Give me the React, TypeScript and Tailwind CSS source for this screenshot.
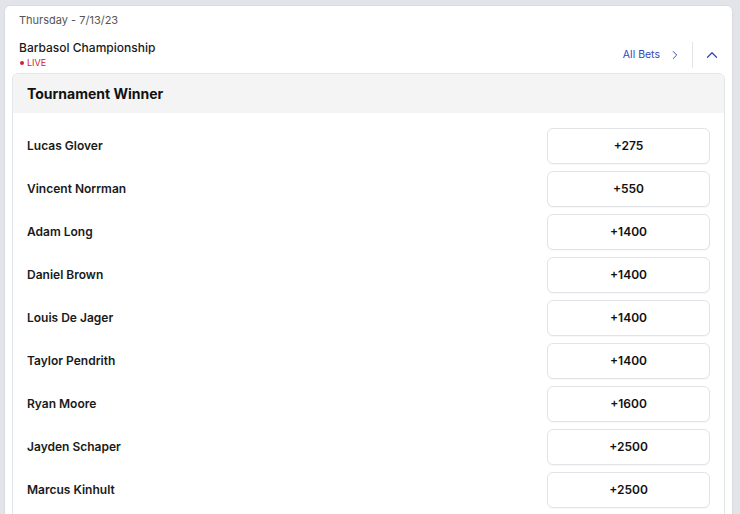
import { ChevronRight, ChevronUp } from 'lucide-react';

const runners = [
  { name: 'Lucas Glover', odds: '+275' },
  { name: 'Vincent Norrman', odds: '+550' },
  { name: 'Adam Long', odds: '+1400' },
  { name: 'Daniel Brown', odds: '+1400' },
  { name: 'Louis De Jager', odds: '+1400' },
  { name: 'Taylor Pendrith', odds: '+1400' },
  { name: 'Ryan Moore', odds: '+1600' },
  { name: 'Jayden Schaper', odds: '+2500' },
  { name: 'Marcus Kinhult', odds: '+2500' },
];

export default function App() {
  return (
    <div
      className="w-[740px] h-[514px] overflow-hidden bg-[#e3e4e9] pl-[4px] pr-[7px] pt-[5px]"
      style={{ fontFamily: 'Inter, "Noto Sans", sans-serif' }}
    >
      <div className="bg-white rounded-t-[6px] h-[530px] px-[7px] border border-[#d9dbe0] flex flex-col">
        {/* header */}
        <div className="pt-[7px] pl-[7px] text-[11px] text-[#555] leading-[14px]">Thursday - 7/13/23</div>
        <div className="flex items-end justify-between pl-[7px] pt-[14px] pb-[4px]">
          <div>
            <div className="text-[12px] font-medium text-[#1a1a1a] leading-[14px]">Barbasol Championship</div>
            <div className="flex items-center gap-[3px] text-[9px] text-[#d4202c] leading-[12px] mt-[2px]">
              <span className="w-[4px] h-[4px] rounded-full bg-[#d4202c] ml-[1px]" />
              LIVE
            </div>
          </div>
          <div className="flex items-center mb-[1px]">
            <div className="flex items-center gap-[8px] text-[10.5px] text-[#3345b8] pr-[10px]">
              All Bets
              <ChevronRight size={14} strokeWidth={1.6} />
            </div>
            <div className="w-px h-[26px] bg-[#e3e4e7]" />
            <div className="pl-[10px] pr-[4px] text-[#3345b8]">
              <ChevronUp size={18} strokeWidth={1.6} />
            </div>
          </div>
        </div>

        {/* market */}
        <div className="border border-[#e4e5e8] rounded-[6px] flex-1">
          <div className="bg-[#f4f4f5] h-[39px] flex items-center px-[14px] rounded-t-[6px] text-[14px] font-bold text-[#111]">
            Tournament Winner
          </div>
          <div className="pt-[15px] pl-[14px] pr-[14px] flex flex-col gap-[7px]">
            {runners.map((r) => (
              <div key={r.name} className="flex items-center justify-between">
                <div className="text-[12px] font-semibold text-[#1a1a1a]">{r.name}</div>
                <button className="w-[163px] h-[36px] border border-[#e2e3e6] rounded-[6px] bg-white text-[12px] font-semibold text-[#111] shadow-[0_1px_1px_rgba(0,0,0,0.03)]">
                  {r.odds}
                </button>
              </div>
            ))}
          </div>
        </div>
      </div>
    </div>
  );
}
